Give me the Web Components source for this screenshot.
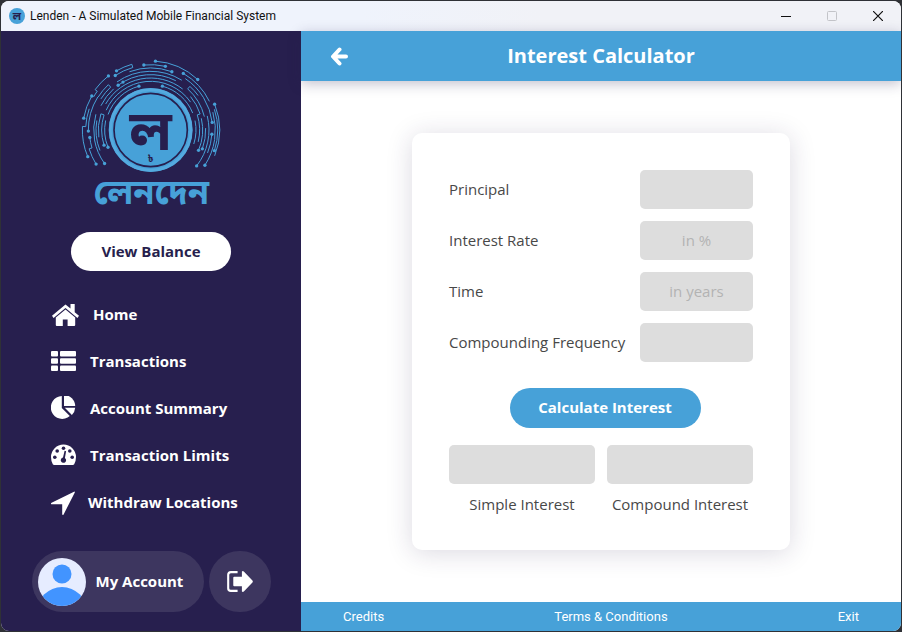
<!DOCTYPE html>
<html lang="en">
<head>
<meta charset="utf-8">
<title>Lenden - A Simulated Mobile Financial System</title>
<style>
  html, body { margin: 0; height: 100%; background: #2f3136; }
  body { font-family: "Open Sans", "Noto Sans", sans-serif; font-size: 15px; color: #444; }
</style>
</head>
<body>
<lenden-window>
  <lenden-titlebar slot="titlebar">Lenden - A Simulated Mobile Financial System</lenden-titlebar>
  <lenden-sidebar slot="sidebar">
    <nav-item icon="home">Home</nav-item>
    <nav-item icon="list">Transactions</nav-item>
    <nav-item icon="pie">Account Summary</nav-item>
    <nav-item icon="gauge">Transaction Limits</nav-item>
    <nav-item icon="arrow">Withdraw Locations</nav-item>
  </lenden-sidebar>
  <page-header slot="header">Interest Calculator</page-header>
  <interest-card></interest-card>
  <page-footer slot="footer"></page-footer>
</lenden-window>

<script>
const define = (name, html, setup) => customElements.define(name, class extends HTMLElement {
  constructor() {
    super();
    this.attachShadow({ mode: 'open' }).innerHTML = html;
  }
  connectedCallback() { if (setup) setup(this, this.shadowRoot); }
});

/* ---------- logo ---------- */
const polar = (r, deg) => {
  const a = deg * Math.PI / 180;
  return [(242 + r * Math.sin(a)).toFixed(1), (240 - r * Math.cos(a)).toFixed(1)];
};
/* Each trace is a run of [radius, angle] points; equal radii are joined by an arc. */
const traces = [
  [[207, 4], [207, 43]], [[196, -6], [196, 13]],
  [[205, -30], [205, -16], [195, -16], [195, -33]],
  [[206, -38], [206, -54], [198, -54], [198, -60]], [[204, -60], [204, -80]],
  [[205, -113], [205, -87], [195, -87], [195, -71]],
  [[193, -122], [193, -107], [184, -107], [184, -97]],
  [[171, -126], [171, -74]], [[187, -91], [187, -58]],
  [[186, -20], [186, 20]],
  [[176, -58], [176, -43], [186, -43], [186, -58]],
  [[176, -35], [176, 32]], [[166, -36], [166, 27]],
  [[156, -60], [156, 38]], [[166, -64], [166, -42]],
  [[146, -66], [146, 55]], [[136, -70], [136, -15]], [[136, 15], [136, 68]],
  [[196, 30], [196, 64]], [[186, 34], [186, 83]],
  [[176, 54], [176, 42], [166, 42], [166, 76]],
  [[156, 50], [156, 72], [147, 72], [147, 104]],
  [[207, 68], [207, 112]], [[201, 72], [201, 108]],
  [[194, 74], [194, 123]], [[184, 94], [184, 112]],
  [[175, 76], [175, 128]], [[165, 88], [165, 110]], [[156, 77], [156, 113]],
  [[138, -112], [138, -78]], [[147, -108], [147, -72], [157, -72], [157, -98]], [[164, -112], [164, -80]],
  [[136, 78], [136, 108]]
];
const nodes = [[207,4],[207,43],[196,-6],[196,13],[205,-30],[195,-33],[206,-38],[204,-60],[204,-80],[205,-113],
  [193,-122],[184,-97],[171,-126],[187,-91],[186,20],[166,-36],[166,-30],[136,-15],[136,15],[207,68],[186,83],
  [201,108],[194,123],[184,94],[175,128],[165,110],[156,113],[138,-112],[147,-108],[196,30]];
const tracePath = t => t.map(([r, a], i) => {
  const [x, y] = polar(r, a);
  if (!i) return `M${x} ${y}`;
  return t[i - 1][0] === r ? `A${r} ${r} 0 0 ${a > t[i - 1][1] ? 1 : 0} ${x} ${y}` : `L${x} ${y}`;
}).join('');

define('lenden-logo', `
<style>
  :host { display: block; width: 160px; }
  svg { display: block; width: 100%; overflow: visible; }
  text { font-family: "Noto Sans Bengali", "Lohit Bengali", "Noto Sans", sans-serif; font-weight: 700; text-anchor: middle; }
</style>
<svg viewBox="3 0 480 495" role="img" aria-label="Lenden">
  <g fill="none" stroke="#47a1d8" stroke-width="3">${traces.map(t => `<path d="${tracePath(t)}"/>`).join('')}</g>
  <g fill="#47a1d8">${nodes.map(n => { const [x, y] = polar(...n); return `<circle cx="${x}" cy="${y}" r="5"/>`; }).join('')}</g>
  <circle cx="242" cy="240" r="126" fill="#47a1d8"/>
  <circle cx="242" cy="240" r="121" fill="none" stroke="#55aadf" stroke-width="8"/>
  <circle cx="242" cy="240" r="110" fill="none" stroke="#271f4e" stroke-width="5"/>
  <text x="242" y="300" font-size="168" fill="#271f4e">ল</text>
  <text x="242" y="335" font-size="28" fill="#271f4e">৳</text>
  <text x="244" y="461" font-size="103" fill="#47a1d8">লেনদেন</text>
</svg>`);

/* ---------- window frame ---------- */
define('lenden-window', `
<style>
  :host { display: block; box-sizing: border-box; min-height: 100vh; padding: 1px; }
  .frame { display: grid; grid-template: 30px auto 1fr 29px / 300px 1fr; min-height: calc(100vh - 2px);
    border-radius: 8px; overflow: hidden; background: #fff; }
  slot[name=titlebar] { display: block; grid-column: 1 / -1; }
  slot[name=sidebar] { display: grid; grid-area: 2 / 1 / 5 / 2; }
  slot[name=header] { display: block; grid-area: 2 / 2; }
  main { grid-area: 3 / 2; display: flex; align-items: center; justify-content: center; }
  slot[name=footer] { display: block; grid-area: 4 / 2; }
</style>
<div class="frame">
  <slot name="titlebar"></slot>
  <slot name="sidebar"></slot>
  <slot name="header"></slot>
  <main><slot></slot></main>
  <slot name="footer"></slot>
</div>`);

define('lenden-titlebar', `
<style>
  :host { display: flex; align-items: center; height: 30px; padding-left: 8px; box-sizing: border-box;
    background: linear-gradient(90deg, #eff3fc 40%, #f1f2f7 60%); color: #111; font-family: Roboto, "Open Sans", sans-serif; font-size: 12px; }
  .mark { width: 16px; height: 16px; margin-right: 5px; }
  .mark text { font: 700 11px "Noto Sans Bengali", "Noto Sans", sans-serif; text-anchor: middle; }
  .title { flex: 1; white-space: nowrap; }
  button { width: 46px; height: 30px; padding: 0; border: 0; background: none; color: #111; display: grid; place-items: center; }
  button:disabled { color: #c3c4c9; }
  svg { display: block; fill: none; stroke: currentColor; }
</style>
<svg class="mark" viewBox="0 0 16 16" aria-hidden="true"><circle cx="8" cy="8" r="8" fill="#47a1d8" stroke="none"/><text x="8" y="12" fill="#271f4e" stroke="none">ল</text></svg>
<span class="title"><slot></slot></span>
<button aria-label="Minimize"><svg width="10" height="10"><path d="M0 5.5h10"/></svg></button>
<button aria-label="Maximize" disabled><svg width="10" height="10"><rect x=".5" y=".5" width="9" height="9" rx="1"/></svg></button>
<button aria-label="Close"><svg width="10" height="10"><path d="M0 0l10 10M10 0L0 10" stroke-width="1.2"/></svg></button>`);

/* ---------- sidebar ---------- */
define('lenden-sidebar', `
<style>
  :host { display: flex; flex-direction: column; align-items: center; padding: 19px 0; box-sizing: border-box; background: #271f4e; color: #fff; }
  button { font: inherit; font-weight: 700; border: 0; padding: 0; color: #fff; cursor: pointer; }
  .balance { width: 160px; height: 39px; margin: 17px 0 20px; padding-bottom: 2px; border-radius: 20px; background: #fff; color: #271f4e; }
  nav { align-self: stretch; padding-left: 50px; }
  .account { display: flex; gap: 5px; margin-top: auto; }
  .account button { height: 61px; background: #3d365f; border-radius: 31px; }
  .account .me { display: flex; align-items: center; gap: 10px; width: 172px; padding-left: 6px; }
  .me span { padding-bottom: 2px; }
  .out { width: 62px; display: grid; place-items: center; }
  svg { display: block; }
</style>
<lenden-logo></lenden-logo>
<button class="balance">View Balance</button>
<nav><slot></slot></nav>
<div class="account">
  <button class="me">
    <svg width="48" height="48" viewBox="0 0 48 48" aria-hidden="true">
      <defs><clipPath id="c"><circle cx="24" cy="24" r="24"/></clipPath></defs>
      <g clip-path="url(#c)"><rect width="48" height="48" fill="#e6ecff"/><circle cx="24" cy="16" r="9.5" fill="#4294ff"/><circle cx="24" cy="54" r="25" fill="#4294ff"/></g>
    </svg>
    <span>My Account</span>
  </button>
  <button class="out" aria-label="Log out">
    <svg width="27" height="23" viewBox="0 0 28 24" aria-hidden="true">
      <path d="M12 2.2H5Q2.2 2.2 2.2 5v14Q2.2 21.8 5 21.8h7" fill="none" stroke="#fff" stroke-width="2.2"/>
      <path d="M8.500 7h8V1.500q1-.8 2 0L27.500 11q.8 1 0 2L18.500 22.500q-1 .8-2 0V17h-8q-1 0-1-1V8q0-1 1-1z" fill="#fff"/>
    </svg>
  </button>
</div>`);

const icons = {
  home: [30, '<path d="M14.500 2.500 1 13.800l1.600 2.100L14.500 6l11.900 9.900 1.600-2.100-4.300-3.600V2h-4.200v4.600z"/><path d="M14.500 7.500 4.800 15.500V23q0 1 1 1h6v-6.500h4.800V24h6.600q1 0 1-1v-7.500z"/>', '0 0 30 26'],
  list: [27, '<rect x="1" y="3" width="7" height="5.500" rx="1"/><rect x="10" y="3" width="16" height="5.500" rx="1"/><rect x="1" y="10.300" width="7" height="5.500" rx="1"/><rect x="10" y="10.300" width="16" height="5.500" rx="1"/><rect x="1" y="17.600" width="7" height="5.500" rx="1"/><rect x="10" y="17.600" width="16" height="5.500" rx="1"/>', '1 1 27 26'],
  pie: [27, '<path d="M11.800 2.100A11.400 11.400 0 1 0 19.800 22L11.800 14z"/><path d="M14 1v11h11.200A11.200 11.200 0 0 0 14 1z"/><path d="M14.800 13.700h10.400a11 11 0 0 1-3.300 7.200z"/>', '1 2 27 26'],
  gauge: [27, '<path fill-rule="evenodd" d="M13.500 2.500A12.500 12.500 0 0 0 1 15q0 3.900 1.800 7.200.5.800 1.400.8h18.600q.9 0 1.400-.8Q26 18.900 26 15A12.500 12.500 0 0 0 13.500 2.500z"/><g fill="#271f4e"><circle cx="4.800" cy="15.300" r="1.800"/><circle cx="7.200" cy="9" r="1.800"/><circle cx="13.500" cy="6.300" r="1.800"/><circle cx="19.800" cy="9" r="1.800"/><circle cx="22.200" cy="15.300" r="1.800"/><path d="m14.600 8.800 1.500.4-1.200 6.700a2.700 2.700 0 1 1-1.900-.4z"/></g>', '1 1 27 26'],
  arrow: [25, '<path d="M24 1.800Q25 1 24.800 2.400L13.600 24.500Q12.600 25.800 12.200 24.300V14.200H1.800Q0 13.900 1.600 12.700z"/>', '1 0 25 26']
};
define('nav-item', `
<style>
  :host { display: block; }
  a { display: flex; align-items: center; gap: 12px; height: 47px; color: #fff; font-weight: 700; text-decoration: none; white-space: nowrap; }
  span { padding-bottom: 2px; }
  svg { display: block; flex: none; fill: #fff; }
</style>
<a href="#"><svg height="26" aria-hidden="true"></svg><span><slot></slot></span></a>`, (host, root) => {
  const [width, shape, box] = icons[host.getAttribute('icon')];
  const svg = root.querySelector('svg');
  svg.setAttribute('width', width);
  svg.setAttribute('viewBox', box);
  svg.innerHTML = shape;
});

/* ---------- main area ---------- */
define('page-header', `
<style>
  :host { display: grid; grid-template-columns: 76px 1fr 76px; align-items: center; height: 50px; background: #47a1d8;
    box-shadow: 0 3px 12px rgba(39, 31, 78, .28); color: #fff; }
  button { border: 0; background: none; padding: 0; width: 76px; height: 50px; display: grid; place-items: center; }
  h1 { margin: 0; font-size: 20px; line-height: 28px; font-weight: 700; text-align: center; }
</style>
<button aria-label="Back"><svg width="18" height="20" viewBox="0 0 18 20"><path d="M9.500 3.500 3 10.500l6.500 7M3.500 10.500H16" fill="none" stroke="#fff" stroke-width="4" stroke-linejoin="round" stroke-linecap="round"/></svg></button>
<h1><slot></slot></h1>`);

const fieldStyle = `
  input { box-sizing: border-box; height: 39px; border: 0; border-radius: 5px; background: #ddd; padding: 0 8px 2px;
    font: inherit; color: #444; text-align: center; min-width: 0; }
  input::placeholder { color: #b3b3b3; opacity: 1; }
  label { color: #484848; white-space: nowrap; padding-bottom: 2px; }`;
define('form-field', `
<style>
  :host { display: flex; align-items: center; justify-content: space-between; gap: 12px; }
  ${fieldStyle}
  input { width: 113px; }
</style>
<label for="f"></label><input id="f" type="text" inputmode="decimal">`, (host, root) => {
  root.querySelector('label').textContent = host.getAttribute('label');
  root.querySelector('input').placeholder = host.getAttribute('hint') || '';
});
define('result-field', `
<style>
  :host { display: flex; flex: 1 1 0; min-width: 0; flex-direction: column; align-items: center; gap: 9px; }
  ${fieldStyle}
  input { width: 100%; }
  label { line-height: 22px; }
</style>
<input id="r" type="text" readonly><label for="r"></label>`, (host, root) => {
  root.querySelector('label').textContent = host.getAttribute('label');
});

define('interest-card', `
<style>
  :host { display: block; box-sizing: border-box; width: 63%; min-width: 378px; padding: 37px 37px 33px; border-radius: 10px;
    background: #fff; box-shadow: 0 3px 26px rgba(39, 31, 78, .17); }
  form { display: flex; flex-direction: column; gap: 12px; }
  button { align-self: center; width: 191px; height: 40px; margin: 14px 0 5px 8px; border: 0; border-radius: 20px; padding: 0 0 2px;
    background: #47a1d8; color: #fff; font: inherit; font-weight: 700; }
  .results { display: flex; gap: 12px; }
</style>
<form>
  <form-field label="Principal"></form-field>
  <form-field label="Interest Rate" hint="in %"></form-field>
  <form-field label="Time" hint="in years"></form-field>
  <form-field label="Compounding Frequency"></form-field>
  <button type="button">Calculate Interest</button>
  <div class="results">
    <result-field label="Simple Interest"></result-field>
    <result-field label="Compound Interest"></result-field>
  </div>
</form>`);

define('page-footer', `
<style>
  :host { display: flex; align-items: center; justify-content: space-between; height: 29px; padding: 0 42px; background: #47a1d8;
    font-family: Roboto, "Open Sans", sans-serif; font-size: 13px; }
  a { color: #fff; text-decoration: none; }
</style>
<a href="#">Credits</a><a href="#">Terms &amp; Conditions</a><a href="#">Exit</a>`);
</script>
</body>
</html>
